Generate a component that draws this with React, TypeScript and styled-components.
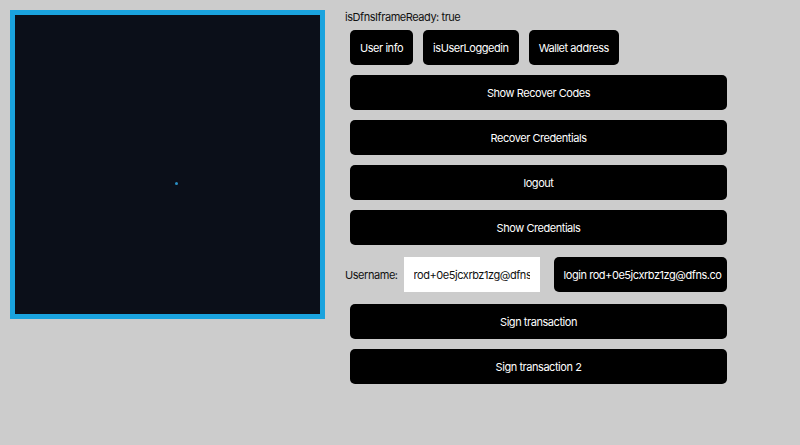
import React from "react";
import styled, { createGlobalStyle } from "styled-components";

const Global = createGlobalStyle`
  html, body { margin: 0; padding: 0; background: #cccccc; }
  body { font-family: Inter, "Liberation Sans", sans-serif; font-size: 11px; letter-spacing: -0.45px; color: #111; }
`;

const Page = styled.div`
  display: flex;
  align-items: flex-start;
  gap: 20px;
  padding: 10px;
`;

const Frame = styled.div`
  box-sizing: border-box;
  width: 315px;
  height: 309px;
  border: 5px solid #1aa3de;
  background: #0b0f19;
  position: relative;
`;

const Spinner = styled.div`
  position: absolute;
  left: 160px;
  top: 167px;
  width: 3px;
  height: 3px;
  border-radius: 50%;
  background: #2a8fc4;
`;

const Column = styled.div`
  display: flex;
  flex-direction: column;
  width: 387px;
`;

const Status = styled.div`
  height: 15px;
  line-height: 15px;
`;

const Row = styled.div<{ $gap?: number }>`
  display: flex;
  align-items: center;
  height: 45px;
  margin: ${(p) => p.$gap ?? 0}px 0;
`;

const Button = styled.button<{ $wide?: boolean }>`
  box-sizing: border-box;
  height: 35px;
  margin: 5px;
  padding: 0 10px;
  border: none;
  border-radius: 5px;
  background: #000;
  color: #fff;
  font-family: Inter, "Liberation Sans", sans-serif;
  font-size: 11px;
  letter-spacing: -0.45px;
  white-space: nowrap;
  overflow: hidden;
  min-width: 0;
  flex: ${(p) => (p.$wide ? "1 1 0" : "none")};
  cursor: pointer;
`;

const Label = styled.span`
  margin-right: 6px;
  color: #111;
`;

const Input = styled.input`
  box-sizing: border-box;
  width: 136px;
  height: 35px;
  flex: none;
  border: none;
  background: #fff;
  padding: 0 10px;
  font-family: Inter, "Liberation Sans", sans-serif;
  font-size: 11px;
  letter-spacing: -0.45px;
  color: #111;
  margin-right: 9px;
  outline: none;
`;

export default function App() {
  return (
    <>
      <Global />
      <Page>
        <Frame>
          <Spinner />
        </Frame>
        <Column>
          <Status>isDfnsIframeReady: true</Status>
          <Row>
            <Button>User info</Button>
            <Button>isUserLoggedin</Button>
            <Button>Wallet address</Button>
          </Row>
          <Row><Button $wide>Show Recover Codes</Button></Row>
          <Row><Button $wide>Recover Credentials</Button></Row>
          <Row><Button $wide>logout</Button></Row>
          <Row><Button $wide>Show Credentials</Button></Row>
          <Row $gap={2}>
            <Label>Username:</Label>
            <Input readOnly value="rod+0e5jcxrbz1zg@dfns.co" />
            <Button $wide>login rod+0e5jcxrbz1zg@dfns.co</Button>
          </Row>
          <Row><Button $wide>Sign transaction</Button></Row>
          <Row><Button $wide>Sign transaction 2</Button></Row>
        </Column>
      </Page>
    </>
  );
}
